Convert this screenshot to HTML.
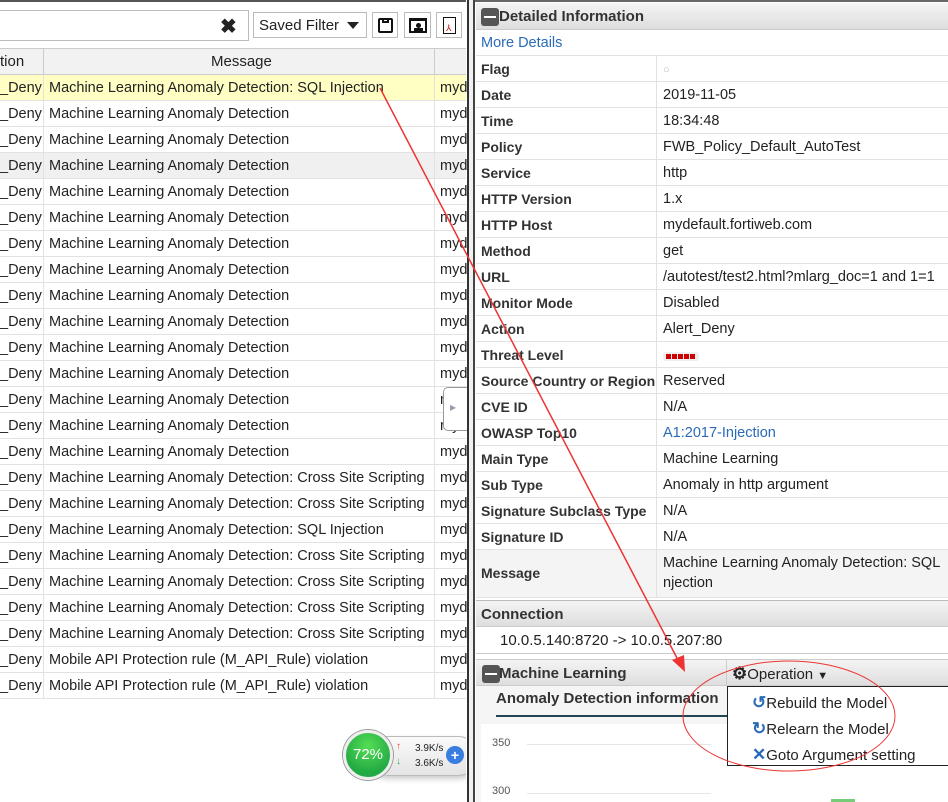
<!DOCTYPE html>
<html><head><meta charset="utf-8"><style>
*{box-sizing:border-box;margin:0;padding:0}
body{width:948px;height:802px;overflow:hidden;background:#fff;font-family:"Liberation Sans",sans-serif;color:#222;position:relative;font-size:14.5px}
.a{position:absolute}
.row{position:absolute;left:0;width:466px;height:26px;border-bottom:1px solid #e2e2e2;white-space:nowrap}
.row span{position:absolute;top:5px}
.c2{left:49px}
.c3{left:440px}
.vl{position:absolute;top:0;height:26px;border-right:1px solid #e2e2e2}
.dr{position:absolute;left:476px;width:472px;height:26px;border-bottom:1px solid #e2e2e2;white-space:nowrap}
.dr b{position:absolute;left:5px;top:5px;font-weight:bold;color:#333;font-size:14px}
.dr i{position:absolute;left:187px;top:5px;font-style:normal}
.dr:before{content:"";position:absolute;left:180px;top:0;bottom:0;border-left:1px solid #e2e2e2}
.hd{position:absolute;left:476px;width:472px;background:linear-gradient(#f4f4f4,#dedede);border-bottom:1px solid #ccc;font-weight:bold;color:#333}
.mi{position:absolute;width:18px;height:18px;background:#555;border-radius:3px}
.mi:after{content:"";position:absolute;left:3px;right:3px;top:8px;height:2px;background:#fff}
</style></head><body>
<div class="a" style="left:0;top:0;width:466px;height:2px;background:#555"></div>
<div class="a" style="left:0;top:10px;width:249px;height:31px;border:1px solid #bbb;border-left:none"></div>
<div class="a" style="left:220px;top:14px;font-size:20px;font-weight:bold">✖</div>
<div class="a" style="left:253px;top:12px;width:114px;height:26px;border:1px solid #bbb;padding:4px 5px;font-size:15px">Saved Filter<span class="a" style="left:93px;top:9px;border:6px solid transparent;border-top:7px solid #222;border-bottom:0"></span></div>
<div class="a" style="left:372px;top:12px;width:26px;height:26px;border:1px solid #bbb"><div class="a" style="left:5px;top:5px;width:15px;height:15px;border:2px solid #111;border-radius:2px"></div><div class="a" style="left:9px;top:5px;width:7px;height:5px;border:2px solid #111;border-top:none"></div></div>
<div class="a" style="left:404px;top:12px;width:27px;height:26px;border:1px solid #bbb"><div class="a" style="left:4px;top:5px;width:18px;height:15px;border:2px solid #111;border-top-width:3px"></div><div class="a" style="left:11px;top:10px;width:5px;height:5px;background:#111;border-radius:50%"></div><div class="a" style="left:9px;top:15px;width:9px;height:4px;background:#111"></div></div>
<div class="a" style="left:436px;top:12px;width:26px;height:26px;border:1px solid #bbb"><div class="a" style="left:6px;top:4px;width:13px;height:17px;border:1.5px solid #111"></div><div class="a" style="left:9px;top:10px;color:#c00;font-size:9px">⅄</div></div>
<div class="a" style="left:0;top:48px;width:466px;height:27px;background:#f2f2f2;border-top:1px solid #ccc;border-bottom:1px solid #ccc"></div>
<div class="a" style="left:43px;top:48px;height:27px;border-left:1px solid #ccc"></div>
<div class="a" style="left:434px;top:48px;height:27px;border-left:1px solid #ccc"></div>
<div class="a" style="left:0;top:53px;font-size:15px">tion</div>
<div class="a" style="left:211px;top:53px;font-size:15px">Message</div>
<div id="rows"></div>
<script>
var m=["Machine Learning Anomaly Detection: SQL Injection"];
for(var i=0;i<14;i++)m.push("Machine Learning Anomaly Detection");
m.push("Machine Learning Anomaly Detection: Cross Site Scripting","Machine Learning Anomaly Detection: Cross Site Scripting","Machine Learning Anomaly Detection: SQL Injection","Machine Learning Anomaly Detection: Cross Site Scripting","Machine Learning Anomaly Detection: Cross Site Scripting","Machine Learning Anomaly Detection: Cross Site Scripting","Machine Learning Anomaly Detection: Cross Site Scripting","Mobile API Protection rule (M_API_Rule) violation","Mobile API Protection rule (M_API_Rule) violation");
var h="";
for(var i=0;i<m.length;i++){var bg=i==0?"#ffffc4":(i==3?"#f0f0f0":"#fff");
h+='<div class="row" style="top:'+(75+i*26)+'px;background:'+bg+'"><div class="vl" style="left:0;width:44px"></div><div class="vl" style="left:0;width:435px"></div><span style="left:0">_Deny</span><span class="c2">'+m[i]+'</span><span class="c3">myd</span></div>';}
document.getElementById("rows").innerHTML=h;
</script>
<div class="a" style="left:443px;top:387px;width:24px;height:44px;background:#fff;border:1px solid #999;border-right:none;border-radius:5px 0 0 5px;color:#99a;font-size:12px;padding:12px 0 0 6px">▸</div>
<!-- widget -->
<div class="a" style="left:0;top:700px;width:466px;height:102px;overflow:hidden">
<div class="a" style="left:368px;top:36px;width:110px;height:40px;background:linear-gradient(#fafafa,#e4e4e4);border:1px solid #bbb;border-radius:20px;box-shadow:0 3px 6px rgba(0,0,0,.2)"></div>
<div class="a" style="left:343px;top:30px;width:50px;height:50px;border-radius:50%;background:radial-gradient(circle at 50% 30%,#5d5,#2a4 70%);border:3px solid #eee;box-shadow:0 0 0 1px #999;color:#fff;font-size:15px;text-align:center;line-height:44px">72%</div>
<div class="a" style="left:396px;top:41px;color:#e43;font-size:10px;font-weight:bold">↑</div>
<div class="a" style="left:396px;top:56px;color:#3a5;font-size:10px;font-weight:bold">↓</div>
<div class="a" style="left:415px;top:43px;font-size:10px">3.9K/s</div>
<div class="a" style="left:415px;top:58px;font-size:10px">3.6K/s</div>
<div class="a" style="left:446px;top:46px;width:18px;height:18px;border-radius:50%;background:#3a7de0;color:#fff;font-weight:bold;font-size:14px;text-align:center;line-height:18px">+</div>
</div>
<div class="a" style="left:467px;top:0;width:2px;height:802px;background:#333"></div>
<div class="a" style="left:469px;top:0;width:5px;height:802px;background:#f0f0f0"></div>
<div class="a" style="left:473px;top:0;width:2px;height:802px;background:#444"></div>
<div class="a" style="left:475px;top:0;width:473px;height:2px;background:#666"></div>
<div class="hd" style="top:3px;height:27px"><div class="mi" style="left:5px;top:5px"></div><span class="a" style="left:23px;top:5px;font-size:15px">Detailed Information</span></div>
<div class="a" style="left:476px;top:30px;width:472px;height:26px;border-bottom:1px solid #e2e2e2;color:#2a6ab8;padding:5px 5px">More Details</div>
<div id="det"></div>
<script>
var d=[["Flag",'<span style="color:#bbb;font-size:11px">○</span>'],["Date","2019-11-05"],["Time","18:34:48"],["Policy","FWB_Policy_Default_AutoTest"],["Service","http"],["HTTP Version","1.x"],["HTTP Host","mydefault.fortiweb.com"],["Method","get"],["URL","/autotest/test2.html?mlarg_doc=1 and 1=1"],["Monitor Mode","Disabled"],["Action","Alert_Deny"],["Threat Level",'<span style="display:inline-block;margin-top:5px;padding:2px 3px;background:#eee;border-radius:3px"><span style="display:block;width:30px;height:5px;background:repeating-linear-gradient(90deg,#c00 0 5px,#eee 5px 6px)"></span></span>'],["Source Country or Region","Reserved"],["CVE ID","N/A"],["OWASP Top10",'<span style="color:#2a6ab8">A1:2017-Injection</span>'],["Main Type","Machine Learning"],["Sub Type","Anomaly in http argument"],["Signature Subclass Type","N/A"],["Signature ID","N/A"]];
var h="";for(var i=0;i<d.length;i++)h+='<div class="dr" style="top:'+(56+i*26)+'px"><b>'+d[i][0]+'</b><i>'+d[i][1]+'</i></div>';
h+='<div class="dr" style="top:550px;height:48px;background:#f4f4f4"><b style="top:15px">Message</b><i style="line-height:20px;top:3px">Machine Learning Anomaly Detection: SQL<br>njection</i></div>';
document.getElementById("det").innerHTML=h;
</script>
<div class="hd" style="top:600px;height:27px;border-top:1px solid #bbb"><span class="a" style="left:5px;top:5px;font-size:15px">Connection</span></div>
<div class="a" style="left:500px;top:632px;font-size:15px">10.0.5.140:8720 -&gt; 10.0.5.207:80</div>
<div class="a" style="left:476px;top:653px;width:472px;border-top:1px solid #ccc"></div>
<div class="hd" style="top:659px;height:27px;border-top:1px solid #ccc"><div class="mi" style="left:6px;top:5px"></div><span class="a" style="left:23px;top:5px;font-size:15px">Machine Learning</span><div class="a" style="left:250px;top:0;height:27px;border-left:1px solid #ccc"></div><span class="a" style="left:256px;top:4px;font-size:15px;font-weight:normal;color:#222"><b style="font-size:17px">⚙</b>Operation <span style="font-size:11px">▼</span></span></div>
<div class="a" style="left:476px;top:686px;width:252px;height:116px;background:#f5f5f5"></div>
<div class="a" style="left:496px;top:690px;font-weight:bold;font-size:15px;color:#333">Anomaly Detection information</div>
<div class="a" style="left:496px;top:715px;width:232px;height:2px;background:#245"></div>
<div class="a" style="left:481px;top:724px;width:247px;height:78px;background:#fff"></div>
<div class="a" style="left:492px;top:737px;font-size:11px;color:#555">350</div>
<div class="a" style="left:492px;top:785px;font-size:11px;color:#555">300</div>
<div class="a" style="left:527px;top:744px;width:184px;border-top:1px solid #e6e6e6"></div>
<div class="a" style="left:527px;top:793px;width:184px;border-top:1px solid #e6e6e6"></div>
<div class="a" style="left:831px;top:799px;width:24px;height:3px;background:#7c7"></div>
<div class="a" style="left:727px;top:686px;width:222px;height:80px;background:#fff;border:1px solid #222;border-right:none;font-size:15px">
<div class="a" style="left:24px;top:6px"><span style="color:#2a6ab8;font-weight:bold;font-size:17px">↺</span>Rebuild the Model</div>
<div class="a" style="left:24px;top:32px"><span style="color:#2a6ab8;font-weight:bold;font-size:17px">↻</span>Relearn the Model</div>
<div class="a" style="left:24px;top:58px"><span style="color:#2a6ab8;font-weight:bold;font-size:17px">✕</span>Goto Argument setting</div>
</div>
<svg class="a" style="left:0;top:0" width="948" height="802">
<line x1="380" y1="88" x2="678" y2="660" stroke="#e33" stroke-width="1.5"/>
<polygon points="685,672 672,660 684,655" fill="#e33"/>
<ellipse cx="789" cy="716" rx="106" ry="55" fill="none" stroke="#e33" stroke-width="1"/>
</svg>
</body></html>
